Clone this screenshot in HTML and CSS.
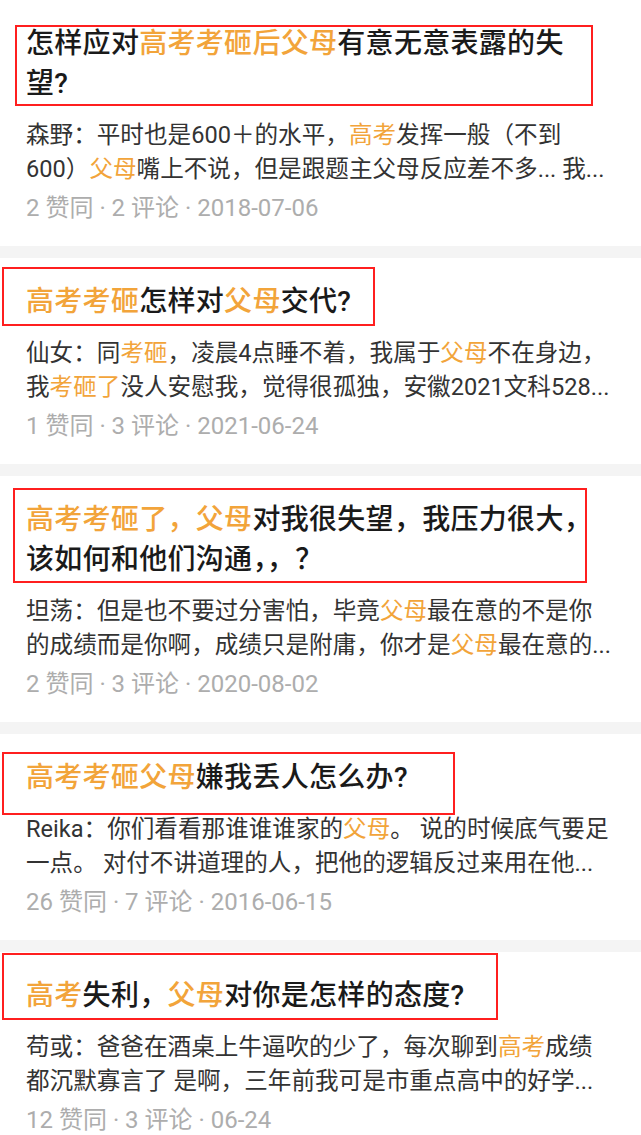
FILE: index.html
```html
<!DOCTYPE html>
<html lang="zh-CN">
<head>
  <meta charset="UTF-8" />
  <title>搜索结果</title>
  <link rel="stylesheet" href="styles.css">
</head>
<body>
  <div class="feed">

    <div class="item">
      <span class="mark mark-1"></span>
      <h2 class="title">怎样应对<em>高考考砸后父母</em>有意无意表露的失<br>望?</h2>
      <p class="excerpt">森野：平时也是600＋的水平，<em>高考</em>发挥一般（不到<br>600）<em>父母</em>嘴上不说，但是跟题主父母反应差不多... 我...</p>
      <div class="meta">2 赞同 · 2 评论 · 2018-07-06</div>
    </div>

    <div class="item">
      <span class="mark mark-2"></span>
      <h2 class="title"><em>高考考砸</em>怎样对<em>父母</em>交代?</h2>
      <p class="excerpt">仙女：同<em>考砸</em>，凌晨4点睡不着，我属于<em>父母</em>不在身边，<br>我<em>考砸了</em>没人安慰我，觉得很孤独，安徽2021文科528...</p>
      <div class="meta">1 赞同 · 3 评论 · 2021-06-24</div>
    </div>

    <div class="item">
      <span class="mark mark-3"></span>
      <h2 class="title"><em>高考考砸了，父母</em>对我很失望，我压力很大，<br>该如何和他们沟通，，？</h2>
      <p class="excerpt">坦荡：但是也不要过分害怕，毕竟<em>父母</em>最在意的不是你<br>的成绩而是你啊，成绩只是附庸，你才是<em>父母</em>最在意的...</p>
      <div class="meta">2 赞同 · 3 评论 · 2020-08-02</div>
    </div>

    <div class="item">
      <span class="mark mark-4"></span>
      <h2 class="title"><em>高考考砸父母</em>嫌我丢人怎么办?</h2>
      <p class="excerpt">Reika：你们看看那谁谁谁家的<em>父母</em>。 说的时候底气要足<br>一点。 对付不讲道理的人，把他的逻辑反过来用在他...</p>
      <div class="meta">26 赞同 · 7 评论 · 2016-06-15</div>
    </div>

    <div class="item">
      <span class="mark mark-5"></span>
      <h2 class="title"><em>高考</em>失利，<em>父母</em>对你是怎样的态度?</h2>
      <p class="excerpt">苟或：爸爸在酒桌上牛逼吹的少了，每次聊到<em>高考</em>成绩<br>都沉默寡言了 是啊，三年前我可是市重点高中的好学...</p>
      <div class="meta">12 赞同 · 3 评论 · 06-24</div>
    </div>

  </div>
</body>
</html>
```

FILE: styles.css
```css
body {
  margin: 0;
  background: #f4f4f4;
  font-family: Roboto, "Noto Sans CJK SC", sans-serif;
}
.feed {
  display: flex;
  flex-direction: column;
  gap: 12px;
}
.item {
  position: relative;
  background: #fff;
  padding: 24px 20px 23px 26px;
}
.item:last-child {
  padding-bottom: 40px;
}
em {
  font-style: normal;
  color: #f2a43a;
}
.title {
  margin: 0;
  font-size: 28px;
  line-height: 40px;
  font-weight: 500;
  letter-spacing: 0.3px;
  color: #1a1a1a;
  white-space: nowrap;
}
.excerpt {
  margin: 14px 0 0;
  font-size: 23.6px;
  line-height: 34px;
  color: #333;
  white-space: nowrap;
}
.meta {
  margin-top: 7px;
  font-size: 24px;
  line-height: 30px;
  color: #adadad;
}

/* red highlight frames drawn over the titles */
.mark {
  position: absolute;
  border: 2px solid #ff1f1f;
  box-sizing: border-box;
}
.mark-1 { left: 15px; top: 25px; width: 578px; height: 81px; }
.mark-2 { left: 2px; top: 9px; width: 373px; height: 59px; }
.mark-3 { left: 13px; top: 12px; width: 574px; height: 95px; }
.mark-4 { left: 2px; top: 18px; width: 453px; height: 63px; }
.mark-5 { left: 2px; top: 1px; width: 496px; height: 67px; }
```
